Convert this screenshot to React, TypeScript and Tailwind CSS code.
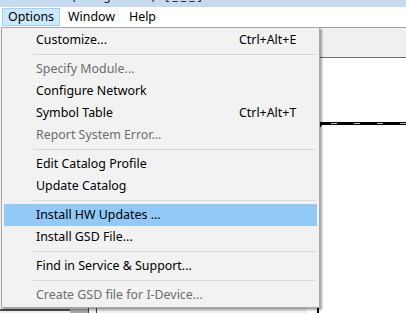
import React from 'react';

type Entry =
  | { kind: 'item'; label: string; shortcut?: string; disabled?: boolean; active?: boolean }
  | { kind: 'sep' };

const entries: Entry[] = [
  { kind: 'item', label: 'Customize...', shortcut: 'Ctrl+Alt+E' },
  { kind: 'sep' },
  { kind: 'item', label: 'Specify Module...', disabled: true },
  { kind: 'item', label: 'Configure Network' },
  { kind: 'item', label: 'Symbol Table', shortcut: 'Ctrl+Alt+T' },
  { kind: 'item', label: 'Report System Error...', disabled: true },
  { kind: 'sep' },
  { kind: 'item', label: 'Edit Catalog Profile' },
  { kind: 'item', label: 'Update Catalog' },
  { kind: 'sep' },
  { kind: 'item', label: 'Install HW Updates ...', active: true },
  { kind: 'item', label: 'Install GSD File...' },
  { kind: 'sep' },
  { kind: 'item', label: 'Find in Service & Support...' },
  { kind: 'sep' },
  { kind: 'item', label: 'Create GSD file for I-Device...', disabled: true },
];

const font = { fontFamily: '"Noto Sans", "Open Sans", sans-serif' };

const App: React.FC = () => {
  return (
    <div
      className="relative w-[406px] h-[313px] overflow-hidden bg-[#f0f0f0] flex flex-col text-[12.4px] text-black"
      style={font}
    >
      {/* window title, mostly scrolled away */}
      <div className="h-[7px] bg-[#c6dbef] overflow-hidden shrink-0">
        <div className="-mt-[11px] pl-[72px] text-[12px] leading-[14px] text-[#222] whitespace-nowrap">
          (configuration) - [ _ _ _ ]
        </div>
      </div>

      {/* menu bar */}
      <div className="h-[20px] bg-white flex items-center shrink-0">
        <div className="ml-[2px] h-[18px] w-[58px] bg-[#cce8ff] border border-[#99d1ff] flex items-center justify-center">
          Options
        </div>
        <div className="ml-[8px] w-[61px]">Window</div>
        <div>Help</div>
      </div>

      {/* body */}
      <div className="flex flex-1 min-h-0">
        <div className="w-[320px] flex flex-col justify-end">
          <div className="flex items-end h-[6px]">
            <div className="w-[70px] h-[2px] bg-[#505050] mb-[2px]" />
            <div className="w-[18px] h-[4px] bg-[#a8a8a8]" />
            <div className="w-px h-[6px] bg-[#404040]" />
            <div className="w-[7px]" />
            <div className="w-px h-[6px] bg-[#404040]" />
          </div>
        </div>
        <div className="flex-1 flex flex-col">
          <div className="h-[31px] border-t border-[#a0a0a0] border-b border-b-[#6e6e6e] bg-[#f0f0f0]" />
          <div className="h-[64px] bg-white" />
          <div className="h-[3px] bg-black flex items-center gap-[17px] pl-[24px]">
            <div className="w-[6px] h-px bg-[#bbb]" />
            <div className="w-[6px] h-px bg-[#bbb]" />
            <div className="w-[6px] h-px bg-[#bbb]" />
            <div className="w-[6px] h-px bg-[#bbb]" />
          </div>
          <div className="flex-1 bg-white relative">
            <svg className="absolute left-[6px] top-0" width="9" height="6" viewBox="0 0 9 6">
              <polygon points="0,0 9,0 4.5,6" fill="black" />
            </svg>
            <div className="ml-[10px] w-[2px] h-full bg-black" />
          </div>
        </div>
      </div>

      {/* Options dropdown */}
      <div className="absolute left-[1px] top-[27px] w-[319px] h-[281px] bg-[#f2f2f2] border border-[#a8a8a8] shadow-[2px_2px_2px_rgba(0,0,0,0.35)] pt-[1px]">
        {entries.map((e, i) =>
          e.kind === 'sep' ? (
            <div key={i} className="h-[7px] pt-[3px] pl-[31px] pr-[3px]">
              <div className="h-px bg-[#d7d7d7]" />
            </div>
          ) : (
            <div
              key={i}
              className={
                'h-[22px] mx-[2px] flex items-center pl-[32px] ' +
                (e.active ? 'bg-[#91c9f7] ' : '') +
                (e.disabled ? 'text-[#6d6d6d]' : 'text-black')
              }
            >
              <span className="w-[203px] whitespace-nowrap">{e.label}</span>
              {e.shortcut && <span className="whitespace-nowrap">{e.shortcut}</span>}
            </div>
          )
        )}
      </div>
    </div>
  );
};

export default App;
